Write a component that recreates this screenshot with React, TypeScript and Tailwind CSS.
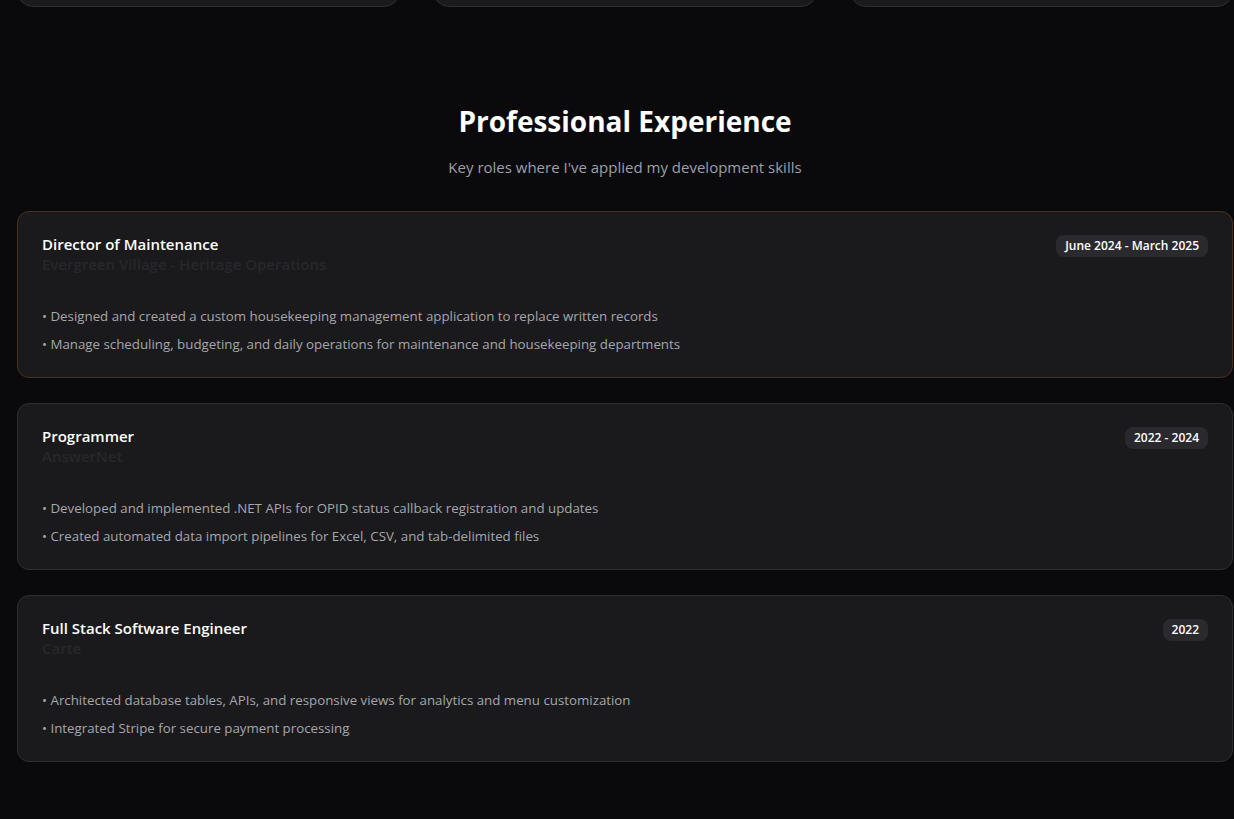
import React from "react";

const jobs = [
  {
    title: "Director of Maintenance",
    company: "Evergreen Village - Heritage Operations",
    date: "June 2024 - March 2025",
    bullets: [
      "Designed and created a custom housekeeping management application to replace written records",
      "Manage scheduling, budgeting, and daily operations for maintenance and housekeeping departments",
    ],
    active: true,
  },
  {
    title: "Programmer",
    company: "AnswerNet",
    date: "2022 - 2024",
    bullets: [
      "Developed and implemented .NET APIs for OPID status callback registration and updates",
      "Created automated data import pipelines for Excel, CSV, and tab-delimited files",
    ],
    active: false,
  },
  {
    title: "Full Stack Software Engineer",
    company: "Carte",
    date: "2022",
    bullets: [
      "Architected database tables, APIs, and responsive views for analytics and menu customization",
      "Integrated Stripe for secure payment processing",
    ],
    active: false,
  },
];

export default function App() {
  return (
    <div
      className="min-h-[819px] w-[1234px] overflow-hidden bg-[#0a0a0c] pl-[17px] pr-[1px]"
      style={{ fontFamily: '"Open Sans", "Noto Sans", sans-serif' }}
    >
      <div className="-mt-[40px] grid grid-cols-3 gap-[33px]">
        {[0, 1, 2].map((i) => (
          <div key={i} className="h-[47px] rounded-2xl border border-[#2f2f33] bg-[#1a1a1c]" />
        ))}
      </div>

      <div className="mt-[97px] text-center">
        <h2 className="text-[28px] font-bold leading-[34px] text-white">Professional Experience</h2>
        <p className="mt-[18px] text-[15px] leading-[22px] text-[#9f9fa7]">
          Key roles where I've applied my development skills
        </p>
      </div>

      <div className="mt-[33px] flex flex-col gap-[25px]">
        {jobs.map((job) => (
          <div
            key={job.title}
            className={`h-[167px] rounded-xl border bg-[#1a1a1c] px-6 pt-[22px] ${
              job.active ? "border-[#4a3018]" : "border-[#2e2e31]"
            }`}
          >
            <div className="flex items-start justify-between">
              <div>
                <div className="text-[15px] font-semibold leading-[20px] text-white">{job.title}</div>
                <div className="text-[15px] font-semibold leading-[20px] text-[#27272b]">{job.company}</div>
              </div>
              <span className="mt-[1px] rounded-lg bg-[#2a2a2e] px-[9px] py-[3px] text-[12px] font-semibold leading-[16px] text-white">
                {job.date}
              </span>
            </div>
            <ul className="mt-[32px] flex flex-col gap-[8px]">
              {job.bullets.map((b) => (
                <li key={b} className="text-[13.3px] leading-[20px] text-[#a6a6ad]">
                  • {b}
                </li>
              ))}
            </ul>
          </div>
        ))}
      </div>
    </div>
  );
}
